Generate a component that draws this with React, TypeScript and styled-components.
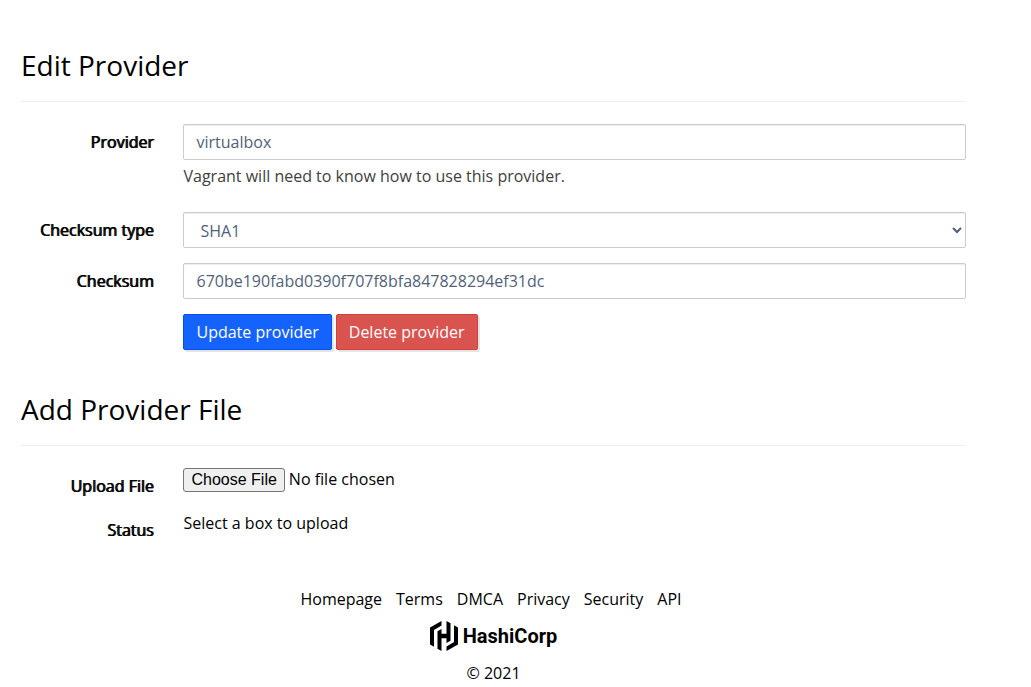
import React from 'react';
import styled, { createGlobalStyle, css } from 'styled-components';

const GlobalStyle = createGlobalStyle`
  *, *::before, *::after { box-sizing: border-box; }
  body {
    margin: 0;
    background: #fff;
    color: #000;
    font-family: 'Open Sans', sans-serif;
    font-size: 16px;
    line-height: 22px;
  }
`;

const Page = styled.div`
  padding: 43px 65px 0 21px;
`;

const Section = styled.section`
  margin-bottom: 37px;
`;

const Title = styled.h2`
  margin: 0 0 22px;
  padding-bottom: 14px;
  border-bottom: 1px solid #eee;
  font-size: 28px;
  font-weight: 400;
  line-height: 44px;
`;

const Row = styled.div`
  display: flex;
  margin: 0 -15px 15px;
`;

const labelStyle = css`
  flex: 0 0 calc(100% / 6);
  padding: 7px 15px 0;
  text-align: right;
  text-shadow: 1px 0 0 #000;
`;

const Label = styled.label`
  ${labelStyle}
`;

const StaticLabel = styled.span`
  ${labelStyle}
`;

const Field = styled.div<{ $offset?: boolean }>`
  flex: 1;
  min-width: 0;
  margin-left: ${(p) => (p.$offset ? 'calc(100% / 6)' : '0')};
  padding: 0 15px;
`;

const controlStyle = css`
  display: block;
  width: 100%;
  height: 36px;
  padding: 6px 12px;
  border: 1px solid #ccc;
  border-radius: 2px;
  background: #fff;
  box-shadow: inset 0 1px 1px rgba(0, 0, 0, 0.075);
  color: #525f7a;
  font: inherit;
`;

const TextInput = styled.input`
  ${controlStyle}
`;

const Select = styled.select`
  ${controlStyle}
`;

const Help = styled.p`
  margin: 5px 0 10px;
  color: #404040;
`;

const Actions = styled.div`
  display: flex;
  gap: 4px;
`;

const Button = styled.button<{ $danger?: boolean }>`
  height: 36px;
  padding: 0 12px;
  border: 1px solid ${(p) => (p.$danger ? '#d43f3a' : '#0050f0')};
  border-radius: 2px;
  background: ${(p) => (p.$danger ? '#d9534f' : '#1563ff')};
  box-shadow: 2px 2px 0 rgba(0, 0, 0, 0.1);
  color: #fff;
  font: inherit;
`;

const FileInput = styled.input`
  display: block;
  width: 100%;
  height: 24px;
  font: inherit;

  &::file-selector-button {
    height: 24px;
    margin-right: 4px;
    padding: 0 7px;
    border: 1px solid #767676;
    border-radius: 3px;
    background: #efefef;
    color: #000;
    font-family: 'Liberation Sans', Arial, sans-serif;
    font-size: 16px;
  }
`;

const Footer = styled.footer`
  padding-top: 10px;
  text-align: center;
`;

const Links = styled.ul`
  display: flex;
  justify-content: center;
  gap: 14px;
  margin: 0 0 11px;
  padding: 0 5px 0 0;
  list-style: none;
`;

const Link = styled.a`
  color: #000;
  text-decoration: none;
`;

const Logo = styled.a`
  display: flex;
  align-items: center;
  justify-content: center;
  gap: 5px;
  margin-bottom: 11px;
  color: #000;
  font-family: Roboto, sans-serif;
  font-size: 20px;
  font-weight: 700;
  line-height: 30px;
  text-decoration: none;
`;

const Copyright = styled.p`
  margin: 0;
`;

const HashiMark = () => (
  <svg width="28" height="30" viewBox="0 0 28 30" fill="currentColor" aria-hidden="true">
    <path d="M11.5 0 0 6.600V23.400L4 25.700V9L11.500 4.600Z" />
    <path d="M16.500 0V12.700H11.500V8L7.500 10.300V27.700L11.500 30V17.300H16.500V22L20.500 19.700V2.300Z" />
    <path d="M16.500 30 28 23.400V6.600L24 4.300V21L16.500 25.400Z" />
  </svg>
);

const links = ['Homepage', 'Terms', 'DMCA', 'Privacy', 'Security', 'API'];

export default function App() {
  return (
    <>
      <GlobalStyle />
      <Page>
        <Section>
          <Title>Edit Provider</Title>
          <form onSubmit={(e) => e.preventDefault()}>
            <Row>
              <Label htmlFor="provider">Provider</Label>
              <Field>
                <TextInput id="provider" type="text" defaultValue="virtualbox" />
                <Help>Vagrant will need to know how to use this provider.</Help>
              </Field>
            </Row>
            <Row>
              <Label htmlFor="checksum-type">Checksum type</Label>
              <Field>
                <Select id="checksum-type" defaultValue="SHA1">
                  <option>SHA1</option>
                  <option>SHA256</option>
                  <option>MD5</option>
                </Select>
              </Field>
            </Row>
            <Row>
              <Label htmlFor="checksum">Checksum</Label>
              <Field>
                <TextInput id="checksum" type="text" defaultValue="670be190fabd0390f707f8bfa847828294ef31dc" />
              </Field>
            </Row>
            <Row>
              <Field $offset>
                <Actions>
                  <Button type="submit">Update provider</Button>
                  <Button type="button" $danger>Delete provider</Button>
                </Actions>
              </Field>
            </Row>
          </form>
        </Section>
        <Section>
          <Title>Add Provider File</Title>
          <Row>
            <Label htmlFor="file">Upload File</Label>
            <Field>
              <FileInput id="file" type="file" />
            </Field>
          </Row>
          <Row>
            <StaticLabel>Status</StaticLabel>
            <Field>Select a box to upload</Field>
          </Row>
        </Section>
        <Footer>
          <Links>
            {links.map((name) => (
              <li key={name}>
                <Link href="#">{name}</Link>
              </li>
            ))}
          </Links>
          <Logo href="#">
            <HashiMark />
            HashiCorp
          </Logo>
          <Copyright>© 2021</Copyright>
        </Footer>
      </Page>
    </>
  );
}
